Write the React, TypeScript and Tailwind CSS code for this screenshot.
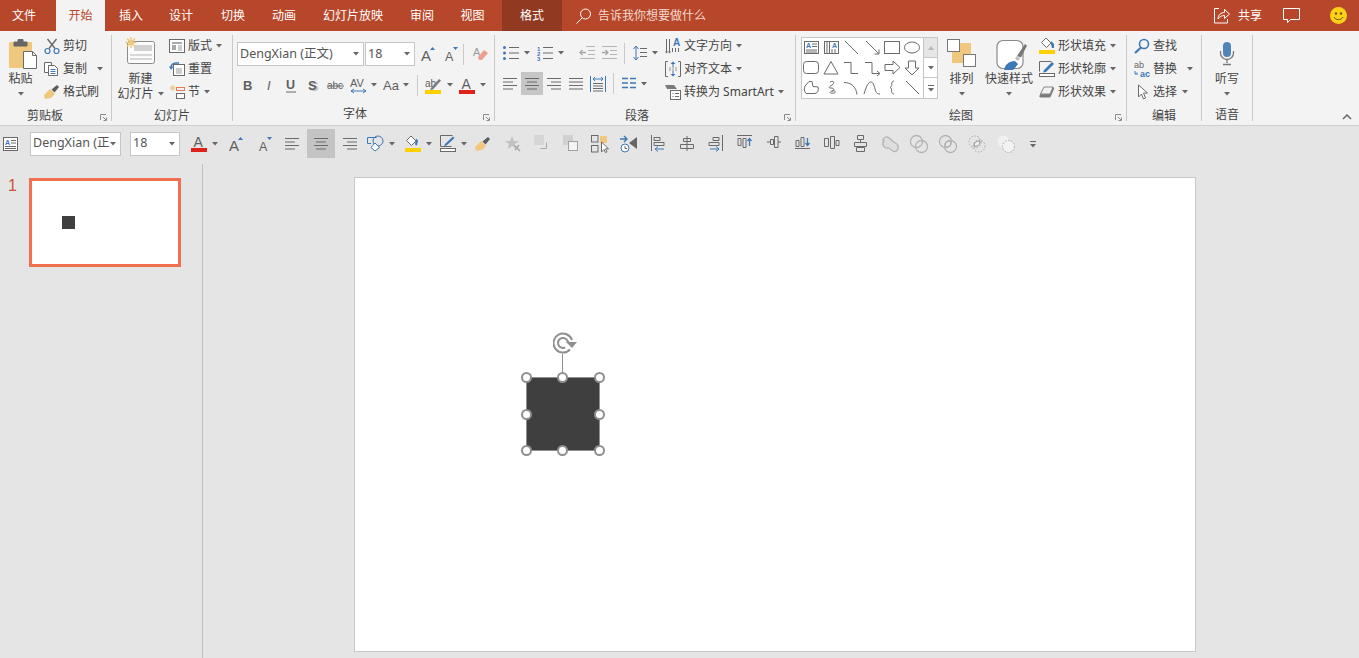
import type { ReactNode } from 'react'

const G = '#6a6a6a'
const L = '#c2c2c2'
const B = '#3d78b8'
const O = '#efc77d'
const Y = '#fdd000'
const R = '#e0201b'

function Svg({ w = 16, h = 16, className = '', children }: { w?: number; h?: number; className?: string; children: ReactNode }) {
  return (
    <svg width={w} height={h} viewBox={`0 0 ${w} ${h}`} fill="none" stroke={G} strokeWidth={1} className={`shrink-0 overflow-visible ${className}`}>
      {children}
    </svg>
  )
}

function Glyph({ x, y, size, children, fill = '#5f5f5f', bold = false, italic = false }: { x: number; y: number; size: number; children: string; fill?: string; bold?: boolean; italic?: boolean }) {
  return (
    <text x={x} y={y} fontSize={size} fill={fill} stroke="none" fontFamily="'Liberation Sans', sans-serif" fontWeight={bold ? 700 : 400} fontStyle={italic ? 'italic' : 'normal'}>
      {children}
    </text>
  )
}

function Caret({ className = '' }: { className?: string }) {
  return (
    <svg width={6} height={4} viewBox="0 0 6 4" className={`shrink-0 ${className}`}>
      <path d="M0 0h6L3 3.5z" fill="#666" />
    </svg>
  )
}

function Launcher({ className = '' }: { className?: string }) {
  return (
    <svg width={7} height={7} viewBox="0 0 7 7" fill="none" stroke="#8a8a8a" className={className}>
      <path d="M.5 6V.5H6M3 3l3 3M6.5 3.5v3h-3" />
    </svg>
  )
}

function Lines({ rows }: { rows: [number, number][] }) {
  return (
    <>
      {rows.map(([x, len], i) => (
        <path key={i} d={`M${x} ${1.5 + i * 3.5}h${len}`} stroke={G} />
      ))}
    </>
  )
}

const AlignLeft = ({ className = '' }) => <Svg w={14} h={13} className={className}><Lines rows={[[0, 14], [0, 10], [0, 14], [0, 10]]} /></Svg>
const AlignCenter = ({ className = '' }) => <Svg w={14} h={13} className={className}><Lines rows={[[0, 14], [2, 10], [0, 14], [2, 10]]} /></Svg>
const AlignRight = ({ className = '' }) => <Svg w={14} h={13} className={className}><Lines rows={[[0, 14], [4, 10], [0, 14], [4, 10]]} /></Svg>
const Justify = ({ className = '' }) => <Svg w={14} h={13} className={className}><Lines rows={[[0, 14], [0, 14], [0, 14], [0, 14]]} /></Svg>

const AGrow = ({ className = '' }) => (
  <Svg w={14} h={16} className={className}>
    <Glyph x={0} y={15} size={15}>A</Glyph>
    <path d="M9 4l2.5-3L14 4z" fill={B} stroke="none" />
  </Svg>
)
const AShrink = ({ className = '' }) => (
  <Svg w={14} h={16} className={className}>
    <Glyph x={1} y={15} size={12.5}>A</Glyph>
    <path d="M9 1h5l-2.5 3z" fill={B} stroke="none" />
  </Svg>
)
const FontColor = ({ className = '' }) => (
  <Svg w={16} h={17} className={className}>
    <Glyph x={2.5} y={12} size={14}>A</Glyph>
    <rect x={0} y={13} width={16} height={4} fill={R} stroke="none" />
  </Svg>
)

function Fill({ className = '' }: { className?: string }) {
  return (
    <Svg w={16} h={17} className={className}>
      <path d="M6 1l5 5-4.5 4.5-5-5z" fill="#fff" />
      <path d="M11 3.5l2 2-1 5-2-1z" fill={B} stroke="none" />
      <rect x={0} y={13} width={16} height={4} fill={Y} stroke="none" />
    </Svg>
  )
}
function Outline({ className = '' }: { className?: string }) {
  return (
    <Svg w={16} h={17} className={className}>
      <path d="M12.5.5H.5v11h11" />
      <path d="M5 9l8-7.5 1.5 1.5-8 7.5-2.5.5z" fill={B} stroke="none" />
      <rect x={.5} y={13.5} width={15} height={3} fill="#fff" />
    </Svg>
  )
}
function Brush({ className = '' }: { className?: string }) {
  return (
    <Svg className={className}>
      <path d="M0 11l6-6 5 5-4 4-6 1z" fill={O} stroke="none" />
      <path d="M7.5 5.5L13 1l2 2-4.5 5.500z" fill="#5c5c5c" stroke="none" />
    </Svg>
  )
}

function Row({ icon, label, caretClass, caret = false }: { icon: ReactNode; label: string; caret?: boolean; caretClass?: string }) {
  return (
    <div className="flex h-[23px] items-center whitespace-nowrap">
      <div className="flex w-[16px] shrink-0 justify-center">{icon}</div>
      <span className="ml-[3px] leading-none">{label}</span>
      {caret && <Caret className={caretClass ?? 'ml-[4px]'} />}
    </div>
  )
}

function Large({ icon, widthClass, lines, caretInline = false }: { icon: ReactNode; widthClass: string; lines: string[]; caretInline?: boolean }) {
  return (
    <div className={`flex shrink-0 flex-col items-center whitespace-nowrap ${widthClass}`}>
      <div className="flex h-[37px] items-start justify-center">{icon}</div>
      {lines.map((t, i) => (
        <div key={t} className="flex h-[15px] items-center leading-none">
          {t}
          {caretInline && i === lines.length - 1 && <Caret className="ml-[4px]" />}
        </div>
      ))}
      {!caretInline && (
        <div className="flex h-[15px] items-center">
          <Caret />
        </div>
      )}
    </div>
  )
}

function Group({ widthClass, label, labelClass = '', launcher = false, children }: { widthClass: string; label: string; labelClass?: string; launcher?: boolean; children: ReactNode }) {
  return (
    <div className={`relative flex shrink-0 flex-col ${widthClass}`}>
      <div className="flex h-[69px] items-start">{children}</div>
      <div className={`flex h-[25px] items-center justify-center pt-[3px] leading-none ${labelClass}`}>{label}</div>
      {launcher && <Launcher className="absolute right-[4px] bottom-[4px]" />}
    </div>
  )
}

const GroupSep = () => <div className="mt-[1px] h-[86px] w-px shrink-0 bg-[#c9c9c9]" />
const MiniSep = ({ className = '' }: { className?: string }) => <div className={`h-[21px] w-px shrink-0 bg-[#c9c9c9] ${className}`} />

function Select({ label, widthClass, clip = false }: { label: string; widthClass: string; clip?: boolean }) {
  return (
    <div className={`flex h-[24px] shrink-0 items-center justify-between border border-[#c6c6c6] bg-white pr-[4px] pl-[2px] text-[12.5px] text-[#555] ${widthClass}`}>
      <span className={`whitespace-nowrap leading-none ${clip ? 'w-[76px] overflow-hidden' : ''}`}>{label}</span>
      <Caret />
    </div>
  )
}

/* large ribbon icons: y is measured from the ribbon row top */
const PasteIcon = (
  <Svg w={30} h={37}>
    <rect x={1} y={8} width={23} height={26} rx={1} fill={O} stroke="none" />
    <path d="M6 8h13v4H6zM10 8V5.5h5V8" fill="#666" stroke="#666" />
    <path d="M15.5 17.5h9l4 4v13h-13z" fill="#fff" />
    <path d="M24.5 17.5v4h4" />
  </Svg>
)
const NewSlideIcon = (
  <Svg w={34} h={37}>
    <rect x={3.5} y={7.5} width={27} height={22} rx={2} fill="#fbfbfb" stroke="#8a8a8a" />
    <rect x={10} y={11} width={18} height={6} fill="#d2d2d2" stroke="none" />
    <path d="M6 21h22M6 25h22" stroke="#b5b5b5" />
    <path d="M7 3v11M1.5 8.5h11M3 4.5l8 8M11 4.5l-8 8" stroke={O} strokeWidth={1.5} />
    <circle cx={7} cy={8.5} r={2.5} fill={O} stroke="none" />
  </Svg>
)
const ArrangeIcon = (
  <Svg w={29} h={37}>
    <rect x={5} y={9} width={19} height={20} fill={O} stroke="none" />
    <rect x={0.5} y={5.5} width={12} height={12} fill="#fff" stroke="#777" />
    <rect x={16.5} y={20.5} width={12} height={12} fill="#fff" stroke="#777" />
  </Svg>
)
const QuickStyleIcon = (
  <Svg w={32} h={37}>
    <rect x={1} y={6.5} width={26} height={28} rx={6} fill="#fff" stroke="#8a8a8a" strokeWidth={1.2} />
    <path d="M21 22l8-12 2 1.5-6 12z" fill="#777" stroke="none" />
    <path d="M21 22l3 2.5-2 2.5-3-2.5z" fill="#bbb" stroke="none" />
    <path d="M8 36c1-6 6-9 11-9l3 3c-2 3-4 5-5 6z" fill={B} stroke="none" />
  </Svg>
)
const MicIcon = (
  <Svg w={16} h={37}>
    <rect x={4} y={8} width={8} height={15} rx={4} fill="#4f84bd" stroke="none" />
    <path d="M1.5 17v2a6.5 6.5 0 0 0 13 0v-2M8 26v3M4 30.5h8" stroke="#777" strokeWidth={1.3} />
  </Svg>
)

/* 16px row icons */
const Cut = (
  <Svg>
    <path d="M5 10.5L12.5 1M11 10.5L3.5 1" strokeWidth={1.4} />
    <circle cx={3.5} cy={13} r={2.5} stroke={B} strokeWidth={1.2} />
    <circle cx={12.5} cy={13} r={2.5} stroke={B} strokeWidth={1.2} />
  </Svg>
)
const Copy = (
  <Svg>
    <path d="M.5 1.5h7v3H4.5v7h-4z" fill="#fff" />
    <path d="M4.5 4.5h6l3 3v7h-9z" fill="#fff" />
    <path d="M6.5 8.5h5M6.5 10.5h5M6.5 12.5h5" stroke={B} />
  </Svg>
)
const LayoutIcon = (
  <Svg>
    <rect x={.5} y={1.5} width={15} height={13} fill="#fff" />
    <rect x={3} y={4} width={10} height={2} fill="#aaa" stroke="none" />
    <rect x={3} y={7} width={4} height={5} fill="#aaa" stroke="none" />
    <path d="M9 8h4M9 10h4M9 12h4" stroke="#999" />
  </Svg>
)
const ResetIcon = (
  <Svg>
    <rect x={4.5} y={3.5} width={11} height={11} fill="#fff" />
    <path d="M7 8h6M7 10h6M7 12h6" stroke="#999" />
    <path d="M2 7c0-3 2-5 5-5h3" stroke={B} strokeWidth={1.6} />
    <path d="M0 5.5h4.5L2 9z" fill={B} stroke="none" />
  </Svg>
)
const SectionIcon = (
  <Svg>
    <path d="M3.5 1v6M.5 4h6M1.5 2l4 4M5.5 2l-4 4" stroke={O} />
    <rect x={7.5} y={3.5} width={8} height={3} stroke="#e57a55" />
    <rect x={7.5} y={9.5} width={8} height={5} fill="#fff" />
  </Svg>
)
const TextDir = (
  <Svg>
    <Glyph x={8} y={8} size={10} fill={B} bold>A</Glyph>
    <path d="M1.5 1v13M4.5 1v13M7.5 10v4M10.5 10v4M13.5 10v4" />
    <path d="M1.5 15.5l-1.5-2h3zM4.5 15.5l-1.5-2h3z" fill={G} stroke="none" />
  </Svg>
)
const AlignText = (
  <Svg>
    <path d="M3 .5H.5v15H3M13 .5h2.5v15H13" />
    <path d="M8 1v5M8 10v5" stroke={B} />
    <path d="M5.5 3L8 .5 10.5 3zM5.5 13L8 15.5 10.5 13z" fill={B} stroke="none" />
    <path d="M4 7h8M4 9h8" stroke="#999" strokeDasharray="2 1" />
  </Svg>
)
const SmartArt = (
  <Svg>
    <path d="M0 1h9l3 4H2z" fill="#7b7b7b" stroke="none" />
    <rect x={5.5} y={6.5} width={10} height={9} fill="#fff" />
    <path d="M7.5 9.5h1M10 9.5h4M7.5 12.5h1M10 12.5h4" />
  </Svg>
)
const ShapeFill = (
  <Svg>
    <path d="M7 0l5 5-4.5 4.5-5-5z" fill="#fff" />
    <path d="M12 3l3 3v4h-2l-1-4z" fill={B} stroke="none" />
    <rect x={0} y={12} width={16} height={4} fill={Y} stroke="none" />
  </Svg>
)
const ShapeOutline = (
  <Svg>
    <path d="M12.5.5H.5v10" />
    <path d="M5 9l8-8 2 2-8 8-3 .5z" fill={B} stroke="none" />
    <rect x={.5} y={12.5} width={15} height={3} fill="#fff" />
  </Svg>
)
const ShapeEffect = (
  <Svg>
    <path d="M5 3h9c1 0 1.5 1 1 2l-3 7c-.5 1-1 1.5-2 1.5H2c-1.5 0-2-1-1.5-2z" fill="#7c7c7c" stroke="none" />
    <path d="M5 3h9l-3 7H1.5z" fill="#f2f2f2" stroke="#8a8a8a" />
  </Svg>
)
const Find = (
  <Svg>
    <circle cx={10} cy={6} r={4.5} stroke={B} strokeWidth={1.6} />
    <path d="M7 9.5L1 15" stroke={B} strokeWidth={2.2} />
  </Svg>
)
const Replace = (
  <Svg>
    <Glyph x={0} y={7} size={9} fill="#666">ab</Glyph>
    <Glyph x={6} y={16} size={9} fill={B} bold>ac</Glyph>
    <path d="M1 10v3h3M3 11.5L1.5 13" stroke={B} />
  </Svg>
)
const Pointer = (
  <Svg w={11} h={16}>
    <path d="M1.5 1v12l3-3 2 5 2-1-2-5h4z" fill="#fff" />
  </Svg>
)

/* small format toolbar pictures */
const Star = <Svg w={18} h={18}><path d="M8 1l2 5h5l-4 3 1.5 5L8 11l-4.5 3L5 9 1 6h5z" fill={L} stroke="none" /><path d="M11 11l5 5M15 10l-4 5" stroke="#a8a8a8" strokeWidth={1.5} /></Svg>
const Forward = <Svg w={16} h={17}><rect x={0} y={0} width={10} height={10} fill="#d6d6d6" stroke="none" /><path d="M12.5 7.5v6h-6" stroke="#a8a8a8" /></Svg>
const Backward = <Svg w={16} h={17}><rect x={0} y={0} width={10} height={10} fill="#d0d0d0" stroke="none" /><rect x={5.5} y={6.5} width={9} height={9} fill="#f4f4f4" stroke="#a0a0a0" /></Svg>
const Pane = (
  <Svg w={18} h={18}>
    <rect x={.5} y={.5} width={6.5} height={6.5} />
    <rect x={.5} y={10.5} width={6.5} height={6.5} />
    <rect x={9} y={1} width={7} height={7} fill={O} stroke="none" />
    <path d="M10.5 7v10l2.5-2.5 1.5 3 1.5-.7-1.5-3h3z" fill="#fff" />
  </Svg>
)
const Anim = (
  <Svg w={18} h={18}>
    <path d="M17 2v12l-8-6z" fill="#666" stroke="none" />
    <path d="M0 4h7M4 1l3 3-3 3" stroke={B} strokeWidth={1.4} />
    <circle cx={5} cy={13} r={4} stroke={B} fill="#fff" />
    <path d="M5 11v2.5h2" stroke={G} />
  </Svg>
)
const AlLeft = <Svg w={14} h={17}><path d="M.5 0v16M3 2.5h6v3H3zM3 7.5h10v3H3z" /><path d="M13 14H4M7 11.5L4 14l3 2.5" stroke={B} /></Svg>
const AlCenter = <Svg w={14} h={17}><path d="M7 1v15M3.5 3.5h7v3h-7zM.5 9.5h13v4H.5z" fill="#e4e5e4" /></Svg>
const AlRight = <Svg w={14} h={17}><path d="M13.5 0v16M4 2.5h6v3H4zM0 7.5h10v3H0z" /><path d="M1 14h9M7 11.5L10 14l-3 2.5" stroke={B} /></Svg>
const AlTop = <Svg w={15} h={14}><path d="M0 .5h15M1 3.5h3v7H1zM6 3.5h3v9H6z" /><path d="M12.5 11V4M10.5 6l2-2.5 2 2.5" stroke={B} strokeWidth={1.3} /></Svg>
const AlMiddle = <Svg w={14} h={14}><path d="M0 7h3M11 7h3M3.5 4.5h3v5h-3zM7.5 1.5h3.5v11H7.5z" /></Svg>
const AlBottom = <Svg w={15} h={14}><path d="M0 13.5h15M1 5.5h3v6H1zM6 2.5h3v9H6z" /><path d="M12.5 3v7M10.5 8l2 2.5 2-2.5" stroke={B} strokeWidth={1.3} /></Svg>
const DistH = <Svg w={15} h={14}><path d="M.5 3.5h4v8h-4zM6.5 1.5h4v12h-4zM12 5.5h3v5h-3z" /></Svg>
const DistV = <Svg w={13} h={17}><path d="M3.5 .5h6v4h-6zM6.5 4.5v3M.5 7.5h12v4H.5zM6.5 11.5v1M2.5 12.5h8v4h-8z" /></Svg>
const Union = <Svg w={18} h={18}><path d="M3 6c-3 3 0 8 4 7 2-.5 3 3 6 3.5 3 .5 5-3 4-6-.7-2-3-2.5-5-4S8 1 5 2 1 5 3 6z" fill="#dedede" stroke="#b4b4b4" strokeWidth={1.3} /></Svg>
const Combine = <Svg w={18} h={18}><circle cx={6.5} cy={6.5} r={6} stroke="#b4b4b4" strokeWidth={1.3} /><circle cx={11.5} cy={11.5} r={6} stroke="#b4b4b4" strokeWidth={1.3} /></Svg>
const Fragment2 = <Svg w={18} h={18}><circle cx={6.5} cy={6.5} r={6} stroke="#b4b4b4" strokeWidth={1.3} /><circle cx={11.5} cy={11.5} r={6} stroke="#b4b4b4" strokeWidth={1.3} /><circle cx={9} cy={9} r={3} stroke="#b4b4b4" /></Svg>
const Intersect = <Svg w={18} h={18}><circle cx={7} cy={7} r={6} stroke="#a8a8a8" strokeDasharray="1.5 1.5" /><circle cx={11} cy={11} r={6} stroke="#a8a8a8" strokeDasharray="1.5 1.5" /><path d="M6 11c0-3 2-5 6-5 0 4-3 6-6 5z" fill="#f2f2f2" stroke="#8e8e8e" /></Svg>
const Subtract = <Svg w={18} h={18}><circle cx={6.5} cy={6.5} r={6} fill="#f1eff1" stroke="none" /><circle cx={11.5} cy={11.5} r={6} fill="#f3f1f3" stroke="#a8a8a8" strokeDasharray="1.5 1.5" /></Svg>

const formatTail = [Star, Forward, Backward, Pane, Anim, AlLeft, AlCenter, AlRight, AlTop, AlMiddle, AlBottom, DistH, DistV, Union, Combine, Fragment2, Intersect, Subtract]

/* shape gallery, 18x16 */
const S = ({ children }: { children: ReactNode }) => <Svg w={18} h={16}>{children}</Svg>
const shapes = [
  <S key="a"><rect x={1.5} y={1.5} width={14} height={12} /><Glyph x={3} y={8} size={7} fill={B} bold>A</Glyph><path d="M9 4h5M9 6.5h5M3 10h11M3 12h11" /></S>,
  <S key="b"><rect x={1.5} y={1.5} width={14} height={12} /><Glyph x={9} y={8} size={7} fill={B} bold>A</Glyph><path d="M4 2v11M6.5 2v11M9 9v4M12 9v4" /></S>,
  <S key="c"><path d="M2 1l13 13" /></S>,
  <S key="d"><path d="M2 1l13 13M15 9.5V14h-4.5" /></S>,
  <S key="e"><rect x={.5} y={1.5} width={15} height={12} /></S>,
  <S key="f"><ellipse cx={8} cy={7.5} rx={7.5} ry={5.5} /></S>,
  <S key="g"><rect x={.5} y={1.5} width={15} height={12} rx={3} /></S>,
  <S key="h"><path d="M8 1.5l7 12.5H1z" /></S>,
  <S key="i"><path d="M1 2.5h7v11h7" /></S>,
  <S key="j"><path d="M1 2.5h7v11h7M13 11l3 2.5-3 2.5" /></S>,
  <S key="k"><path d="M1 4.5h8V1l7 6.5L9 14v-3.5H1z" /></S>,
  <S key="l"><path d="M4.5 1h7v7H15l-7 7-7-7h3.5z" /></S>,
  <S key="m"><path d="M2 6l4-4.5h3l1 5 5 .5c1 3 0 6-3 6.5H3c-2-2-2-5-1-7.5z" /></S>,
  <S key="n"><path d="M7 2c4-2 5 1 2 3S5 8 8 8s4 2 1 3-2 3 2 2-1-4-2-1" /></S>,
  <S key="o"><path d="M1 2.5c7 0 12 4 13 12" /></S>,
  <S key="p"><path d="M0 14C3 4 5 2 7 2s3 3 4 7 2 5 5 5" /></S>,
  <S key="q"><path d="M10 1C7 1 8 5 7.5 6S6 7.5 6 7.5 7.5 8 7.5 9 7 14 10 14" /></S>,
  <S key="r"><path d="M2 1l13 13" /></S>,
]

const tabs: [string, string][] = [
  ['插入', 'w-[52px]'],
  ['设计', 'w-[48px]'],
  ['切换', 'w-[56px]'],
  ['动画', 'w-[46px]'],
  ['幻灯片放映', 'w-[92px]'],
  ['审阅', 'w-[46px]'],
  ['视图', 'w-[55px]'],
]

const handles = [
  'left-[-6px] top-[-6px]', 'left-[30px] top-[-6px]', 'left-[67px] top-[-6px]',
  'left-[-6px] top-[31px]', 'left-[67px] top-[31px]',
  'left-[-6px] top-[67px]', 'left-[30px] top-[67px]', 'left-[67px] top-[67px]',
]

function TitleBar() {
  return (
    <div className="flex h-[31px] items-stretch bg-[#b7472a] text-white">
      <div className="flex w-[48px] items-center justify-center">文件</div>
      <div className="ml-[8px] flex w-[49px] items-center justify-center bg-[#f3f3f3] text-[#b7472a]">开始</div>
      {tabs.map(([t, w]) => (
        <div key={t} className={`flex items-center justify-center ${w}`}>{t}</div>
      ))}
      <div className="ml-[2px] flex w-[60px] items-center justify-center bg-[#923a21]">格式</div>
      <div className="ml-[14px] flex items-center text-[#f4d9d0]">
        <svg width={15} height={16} viewBox="0 0 15 16" fill="none" stroke="#fff" className="shrink-0">
          <circle cx={9.5} cy={6} r={5} />
          <path d="M6 10L.5 15.5" />
        </svg>
        <span className="ml-[7px]">告诉我你想要做什么</span>
      </div>
      <div className="ml-auto flex items-center pr-[12px]">
        <svg width={16} height={16} viewBox="0 0 16 16" fill="none" stroke="#fff" className="shrink-0">
          <path d="M5 .5H.5v14.5h13V11" />
          <path d="M4 11c0-4 3-6.500 6.500-6.500V1.500L15.500 6l-5 4.500V7.500C8 7.500 5.500 8.500 4 11z" />
        </svg>
        <span className="ml-[8px]">共享</span>
        <svg width={17} height={16} viewBox="0 0 17 16" fill="none" stroke="#fff" className="ml-[21px] shrink-0">
          <path d="M.5 .5h16v11H7.500l-3 3v-3h-4z" />
        </svg>
        <svg width={17} height={17} viewBox="0 0 17 17" className="ml-[30px] shrink-0">
          <circle cx={8.5} cy={8.5} r={8.5} fill="#fdd116" />
          <circle cx={6} cy={6.5} r={1.2} fill="#6a5200" />
          <circle cx={11} cy={6.5} r={1.2} fill="#6a5200" />
          <path d="M4 10c1.5 3.5 7.5 3.5 9 0" fill="none" stroke="#6a5200" />
        </svg>
      </div>
    </div>
  )
}

function Ribbon() {
  return (
    <div className="relative flex h-[95px] border-b border-[#cfcfcf] bg-[#f3f3f3] pt-[3px] text-[12px] text-[#444]">
      <Group widthClass="w-[111px]" label="剪贴板" labelClass="pr-[21px]" launcher>
        <Large widthClass="w-[41px] mr-[3px]" icon={<div className="pl-[4px]">{PasteIcon}</div>} lines={['粘贴']} />
        <div className="flex flex-col">
          <Row icon={Cut} label="剪切" />
          <Row icon={Copy} label="复制" caret caretClass="ml-[10px]" />
          <Row icon={<Brush />} label="格式刷" />
        </div>
      </Group>
      <GroupSep />
      <Group widthClass="w-[120px]" label="幻灯片">
        <Large widthClass="w-[57px]" icon={NewSlideIcon} lines={['新建', '幻灯片']} caretInline />
        <div className="flex flex-col">
          <Row icon={LayoutIcon} label="版式" caret />
          <Row icon={ResetIcon} label="重置" />
          <Row icon={SectionIcon} label="节" caret />
        </div>
      </Group>
      <GroupSep />
      <Group widthClass="w-[261px]" label="字体" labelClass="pr-[17px]" launcher>
        <div className="flex flex-col pt-[8px] pl-[4px]">
          <div className="flex h-[24px] items-center">
            <Select label="DengXian (正文)" widthClass="w-[127px]" />
            <Select label="18" widthClass="ml-[1px] w-[50px]" />
            <AGrow className="ml-[6px]" />
            <AShrink className="ml-[9px]" />
            <MiniSep className="ml-[5px]" />
            <Svg w={16} h={16} className="ml-[8px]">
              <Glyph x={1} y={10} size={11} fill="#9a9a9a">A</Glyph>
              <path d="M6 11l6-7 4 3-6 7H7z" fill="#eda08c" stroke="none" />
            </Svg>
          </div>
          <div className="mt-[7px] flex h-[24px] items-center">
            <div className="flex w-[21px] justify-center"><Svg w={10} h={14}><Glyph x={0} y={12} size={13} bold>B</Glyph></Svg></div>
            <div className="flex w-[22px] justify-center"><Svg w={8} h={14}><Glyph x={2} y={12} size={13} italic>I</Glyph></Svg></div>
            <div className="flex w-[22px] justify-center"><Svg w={10} h={15}><Glyph x={0} y={11} size={12.5} bold>U</Glyph><path d="M0 14h10" /></Svg></div>
            <div className="flex w-[23px] justify-center"><Svg w={12} h={15}><Glyph x={2} y={13} size={13} fill="#c4c4c4" bold>S</Glyph><Glyph x={0} y={12} size={13} bold>S</Glyph></Svg></div>
            <div className="flex w-[22px] justify-center"><Svg w={18} h={14}><Glyph x={0} y={11} size={10}>abc</Glyph><path d="M0 8h17" /></Svg></div>
            <Svg w={17} h={17} className="ml-[3px]"><Glyph x={0} y={10} size={11}>AV</Glyph><path d="M1 14h15M4 12l-3 2 3 2M13 12l3 2-3 2" stroke={B} /></Svg>
            <Caret className="ml-[4px]" />
            <Svg w={16} h={14} className="ml-[6px]"><Glyph x={0} y={12} size={13}>Aa</Glyph></Svg>
            <Caret className="ml-[4px]" />
            <MiniSep className="ml-[8px]" />
            <Svg w={17} h={17} className="ml-[7px]">
              <Glyph x={0} y={10} size={10}>ab</Glyph>
              <path d="M6 11L14 2l2 1.5-8 9-3 .5z" fill="#7c7c7c" stroke="none" />
              <rect x={0} y={13} width={16} height={4} fill={Y} stroke="none" />
            </Svg>
            <Caret className="ml-[5px]" />
            <FontColor className="ml-[6px]" />
            <Caret className="ml-[5px]" />
          </div>
        </div>
      </Group>
      <GroupSep />
      <Group widthClass="w-[300px]" label="段落" labelClass="pr-[16px]" launcher>
        <div className="flex w-[170px] flex-col pt-[7px] pl-[8px]">
          <div className="flex h-[24px] items-center">
            <Svg>
              <circle cx={1.5} cy={2.5} r={1.5} fill={B} stroke="none" /><circle cx={1.5} cy={8} r={1.5} fill={B} stroke="none" /><circle cx={1.5} cy={13.5} r={1.5} fill={B} stroke="none" />
              <path d="M6 2.5h10M6 8h10M6 13.5h10" />
            </Svg>
            <Caret className="ml-[5px]" />
            <Svg className="ml-[7px]">
              <Glyph x={0} y={5.5} size={6} fill={B} bold>1</Glyph><Glyph x={0} y={10.5} size={6} fill={B} bold>2</Glyph><Glyph x={0} y={15.5} size={6} fill={B} bold>3</Glyph>
              <path d="M6 2.5h10M6 8h10M6 13.5h10" />
            </Svg>
            <Caret className="ml-[5px]" />
            <Svg className="ml-[15px]">
              <path d="M7 1.5h9M9 5.5h7M9 9.5h7M1 13.5h15" stroke="#b5b5b5" />
              <path d="M7 7.5H1M3.5 5L1 7.5 3.5 10" stroke="#a5a5a5" strokeWidth={1.3} />
            </Svg>
            <Svg className="ml-[6px]">
              <path d="M1 1.5h15M9 5.5h7M9 9.5h7M1 13.5h15" stroke="#b5b5b5" />
              <path d="M1 7.5h6M4.5 5L7 7.5 4.5 10" stroke="#a5a5a5" strokeWidth={1.3} />
            </Svg>
            <MiniSep className="ml-[7px]" />
            <Svg w={14} h={16} className="ml-[8px]">
              <path d="M3 1v14M.5 4L3 1l2.5 3M.5 12L3 15l2.5-3" stroke={B} />
              <path d="M7 3.5h7M7 7.5h7M7 11.5h7" />
            </Svg>
            <Caret className="ml-[5px]" />
          </div>
          <div className="mt-[7px] flex h-[23px] items-center">
            <AlignLeft />
            <div className="ml-[4px] flex h-[23px] w-[22px] items-center justify-center bg-[#c6c6c6]"><AlignCenter /></div>
            <AlignRight className="ml-[4px]" />
            <Justify className="ml-[8px]" />
            <Svg className="ml-[7px]">
              <path d="M.5 0v16M15.5 0v16" stroke={B} />
              <path d="M3 3h10M5 1l-2 2 2 2M11 1l2 2-2 2" stroke={B} />
              <path d="M3 7.5h10M3 10h10M3 12.5h10M3 15h10" />
            </Svg>
            <MiniSep className="ml-[7px]" />
            <Svg w={14} h={13} className="ml-[8px]">
              <path d="M0 1.5h6M8 1.5h6M0 6h6M8 6h6M0 10.5h6M8 10.5h6" stroke={B} strokeWidth={1.3} />
            </Svg>
            <Caret className="ml-[5px]" />
          </div>
        </div>
        <div className="flex flex-col">
          <Row icon={TextDir} label="文字方向" caret />
          <Row icon={AlignText} label="对齐文本" caret />
          <Row icon={SmartArt} label="转换为 SmartArt" caret />
        </div>
      </Group>
      <GroupSep />
      <Group widthClass="w-[330px]" label="绘图" launcher>
        <div className="mt-[3px] ml-[5px] flex h-[62px] w-[137px] shrink-0 border border-[#c6c6c6] bg-white">
          <div className="grid w-[121px] grid-cols-6 grid-rows-3">
            {shapes.map((s, i) => (
              <div key={i} className="flex items-center justify-center">{s}</div>
            ))}
          </div>
          <div className="flex w-[14px] flex-col border-l border-[#c6c6c6]">
            <div className="flex h-[20px] items-center justify-center border-b border-[#c6c6c6] bg-[#e6e6e6]">
              <svg width={6} height={4} viewBox="0 0 6 4"><path d="M3 0l3 4H0z" fill="#b5b5b5" /></svg>
            </div>
            <div className="flex h-[20px] items-center justify-center border-b border-[#c6c6c6]"><Caret /></div>
            <div className="flex flex-1 flex-col items-center justify-center gap-[2px]">
              <div className="h-px w-[6px] bg-[#666]" />
              <Caret />
            </div>
          </div>
        </div>
        <Large widthClass="w-[47px]" icon={ArrangeIcon} lines={['排列']} />
        <Large widthClass="w-[48px]" icon={<div className="pl-[6px]">{QuickStyleIcon}</div>} lines={['快速样式']} />
        <div className="ml-[6px] flex flex-col">
          <Row icon={ShapeFill} label="形状填充" caret />
          <Row icon={ShapeOutline} label="形状轮廓" caret />
          <Row icon={ShapeEffect} label="形状效果" caret />
        </div>
      </Group>
      <GroupSep />
      <Group widthClass="w-[74px]" label="编辑">
        <div className="flex flex-col pl-[7px]">
          <Row icon={Find} label="查找" />
          <Row icon={Replace} label="替换" caret caretClass="ml-[10px]" />
          <Row icon={Pointer} label="选择" caret caretClass="ml-[5px]" />
        </div>
      </Group>
      <GroupSep />
      <Group widthClass="w-[50px]" label="语音">
        <Large widthClass="w-[50px]" icon={MicIcon} lines={['听写']} />
      </Group>
      <GroupSep />
      <svg width={10} height={6} viewBox="0 0 10 6" fill="none" stroke="#666" strokeWidth={1.5} className="absolute right-[7px] bottom-[5px]">
        <path d="M1 5l4-4 4 4" />
      </svg>
    </div>
  )
}

function FormatBar() {
  return (
    <div className="flex h-[38px] items-center bg-[#e4e5e4] pb-[3px] pl-[3px] text-[12px] text-[#444]">
      <Svg w={15} h={14}>
        <rect x={.5} y={.5} width={14} height={13} fill="#fff" />
        <Glyph x={2} y={7.5} size={7} fill={B} bold>A</Glyph>
        <path d="M8 3.5h5M8 6h5M2 9.5h11M2 11.5h11" />
      </Svg>
      <Select label="DengXian (正文)" widthClass="ml-[12px] w-[91px]" clip />
      <Select label="18" widthClass="ml-[9px] w-[50px]" />
      <FontColor className="ml-[11px]" />
      <Caret className="ml-[5px]" />
      <AGrow className="ml-[11px]" />
      <AShrink className="ml-[15px]" />
      <AlignLeft className="ml-[13px]" />
      <div className="ml-[8px] flex h-[29px] w-[28px] shrink-0 items-center justify-center bg-[#c4c4c4]"><AlignCenter /></div>
      <AlignRight className="ml-[8px]" />
      <Svg w={17} h={17} className="ml-[10px]">
        <path d="M4 8.5H.5v-6h9" stroke={B} />
        <circle cx={11} cy={6} r={5} stroke={B} />
        <path d="M8 8l4.5 4.5L8 16l-4-3.5z" fill="#fff" stroke={B} />
      </Svg>
      <Caret className="ml-[5px]" />
      <Fill className="ml-[10px]" />
      <Caret className="ml-[5px]" />
      <Outline className="ml-[8px]" />
      <Caret className="ml-[5px]" />
      <Brush className="ml-[8px]" />
      <div className="ml-[7px] flex">
        {formatTail.map((icon, i) => (
          <div key={i} className="flex w-[29px] justify-center">{icon}</div>
        ))}
      </div>
      <div className="ml-[7px] flex w-[12px] flex-col items-center gap-[2px] pt-[1px]">
        <div className="h-px w-[6px] bg-[#666]" />
        <Caret />
      </div>
    </div>
  )
}

function Slide() {
  return (
    <div className="relative mt-[13px] ml-[151px] h-[475px] w-[842px] shrink-0 border border-[#c8c8c8] bg-white">
      {/* selected shape sits on the free slide canvas */}
      <div className="absolute top-[199px] left-[171px] h-[74px] w-[74px] border border-[#8f8f8f] bg-[#3f3f3f]">
        {handles.map((h) => (
          <div key={h} className={`absolute h-[11px] w-[11px] rounded-full border-2 border-[#8f8f8f] bg-white ${h}`} />
        ))}
        <div className="absolute top-[-24px] left-[35px] h-[19px] w-px bg-[#8f8f8f]" />
        <svg width={26} height={22} viewBox="0 0 26 22" fill="none" stroke="#8f8f8f" strokeWidth={2} className="absolute top-[-46px] left-[26px]">
          <path d="M19 8A9.5 9.5 0 1 0 17 17.5" />
          <path d="M15 11A5 5 0 1 0 12 15.5" />
          <path d="M13 10h11l-5 6z" fill="#8f8f8f" stroke="none" />
        </svg>
      </div>
    </div>
  )
}

export default function App() {
  return (
    <div className="flex h-[658px] w-[1359px] flex-col overflow-hidden bg-[#e4e5e4] font-['Noto_Sans','Noto_Sans_CJK_SC',sans-serif] text-[12px]">
      <TitleBar />
      <Ribbon />
      <FormatBar />
      <div className="flex flex-1">
        <div className="flex w-[203px] shrink-0 items-start border-r border-[#bfbfbf] pt-[14px]">
          <span className="w-[29px] pl-[8px] font-['Liberation_Sans',sans-serif] text-[16px] leading-none text-[#c8553a]">1</span>
          <div className="flex h-[89px] w-[152px] items-start border-[3px] border-[#f0704f] bg-white pt-[35px] pl-[30px]">
            <div className="h-[13px] w-[13px] bg-[#3f3f3f]" />
          </div>
        </div>
        <Slide />
      </div>
    </div>
  )
}
